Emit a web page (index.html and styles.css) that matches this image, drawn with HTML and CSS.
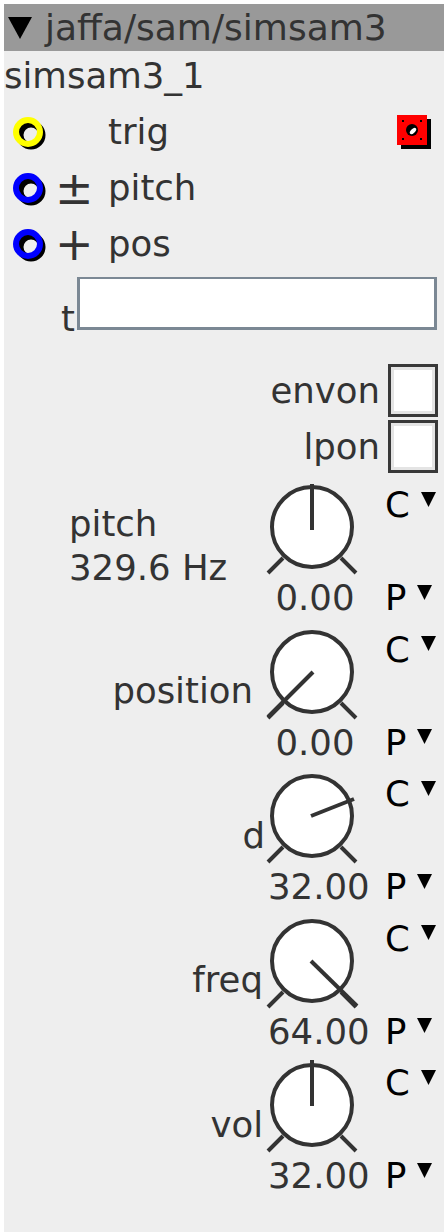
FILE: index.html
```html
<!DOCTYPE html>
<html lang="en">
<head>
    <meta charset="UTF-8">
    <meta name="viewport" content="width=device-width, initial-scale=1.0">
    <title>jaffa/sam/simsam3</title>
    <link rel="stylesheet" href="styles.css">
</head>
<body>
    <div class="module">
        <div class="module-head">
            <svg class="collapse" width="24" height="22" viewBox="0 0 24 22"><polygon points="0,0 24,0 12,22" fill="#000"/></svg>
            <span>jaffa/sam/simsam3</span>
        </div>
        <div class="instance">simsam3_1</div>

        <!-- ports -->
        <div class="port">
            <svg class="jack" width="40" height="40" viewBox="0 0 40 40">
                <circle cx="23" cy="23" r="11" fill="none" stroke="#000" stroke-width="7"/>
                <circle cx="20" cy="20" r="12" fill="none" stroke="#ff0" stroke-width="6"/>
            </svg>
            <span class="sign"></span>
            <span class="port-name">trig</span>
            <svg class="trig-btn" width="38" height="38" viewBox="0 0 38 38">
                <rect x="6" y="6" width="30" height="30" fill="#000"/>
                <rect x="2" y="2" width="30" height="30" fill="#f00"/>
                <rect x="7" y="7" width="2" height="2" fill="#000"/>
                <rect x="25" y="7" width="2" height="2" fill="#000"/>
                <rect x="7" y="25" width="2" height="2" fill="#000"/>
                <rect x="25" y="25" width="2" height="2" fill="#000"/>
                <circle cx="17" cy="17" r="6" fill="#000"/>
                <ellipse cx="18" cy="18" rx="4" ry="2" transform="rotate(-45 18 18)" fill="#fff"/>
            </svg>
        </div>
        <div class="port">
            <svg class="jack" width="40" height="40" viewBox="0 0 40 40">
                <circle cx="23" cy="23" r="11" fill="none" stroke="#000" stroke-width="7"/>
                <circle cx="20" cy="20" r="12" fill="none" stroke="#00f" stroke-width="6"/>
            </svg>
            <span class="sign">±</span>
            <span class="port-name">pitch</span>
        </div>
        <div class="port">
            <svg class="jack" width="40" height="40" viewBox="0 0 40 40">
                <circle cx="23" cy="23" r="11" fill="none" stroke="#000" stroke-width="7"/>
                <circle cx="20" cy="20" r="12" fill="none" stroke="#00f" stroke-width="6"/>
            </svg>
            <span class="sign">+</span>
            <span class="port-name">pos</span>
        </div>

        <!-- params -->
        <div class="text-row">
            <label for="t" class="text-label">t</label>
            <input type="text" id="t" class="text-input">
        </div>
        <div class="check-row first">
            <label for="envon">envon</label>
            <input type="checkbox" id="envon" class="check">
        </div>
        <div class="check-row">
            <label for="lpon">lpon</label>
            <input type="checkbox" id="lpon" class="check">
        </div>

        <div class="knobs">
            <div class="knob-row">
                <div class="knob-label pitch-label">pitch<br>329.6 Hz</div>
                <div class="knob">
                    <svg width="100" height="104" viewBox="0 0 100 104">
                        <circle cx="50" cy="53" r="40" fill="#fff" stroke="#333" stroke-width="4"/>
                        <path d="M6 99 L21 84 M79 84 L94 99" stroke="#333" stroke-width="4"/>
                        <path d="M50 56 L50 10" stroke="#333" stroke-width="4"/>
                    </svg>
                    <div class="knob-value">0.00</div>
                </div>
                <div class="knob-side">
                    <div class="mode">C<svg class="drop" width="15" height="15" viewBox="0 0 15 15"><polygon points="0,0 15,0 7.5,15" fill="#000"/></svg></div>
                    <div class="mode">P<svg class="drop" width="15" height="15" viewBox="0 0 15 15"><polygon points="0,0 15,0 7.5,15" fill="#000"/></svg></div>
                </div>
            </div>

            <div class="knob-row">
                <div class="knob-label position-label">position</div>
                <div class="knob">
                    <svg width="100" height="104" viewBox="0 0 100 104">
                        <circle cx="50" cy="53" r="40" fill="#fff" stroke="#333" stroke-width="4"/>
                        <path d="M6 99 L21 84 M79 84 L94 99" stroke="#333" stroke-width="4"/>
                        <path d="M51 53 L6 98" stroke="#333" stroke-width="4"/>
                    </svg>
                    <div class="knob-value">0.00</div>
                </div>
                <div class="knob-side">
                    <div class="mode">C<svg class="drop" width="15" height="15" viewBox="0 0 15 15"><polygon points="0,0 15,0 7.5,15" fill="#000"/></svg></div>
                    <div class="mode">P<svg class="drop" width="15" height="15" viewBox="0 0 15 15"><polygon points="0,0 15,0 7.5,15" fill="#000"/></svg></div>
                </div>
            </div>

            <div class="knob-row">
                <div class="knob-label short-label">d</div>
                <div class="knob">
                    <svg width="100" height="104" viewBox="0 0 100 104">
                        <circle cx="50" cy="53" r="40" fill="#fff" stroke="#333" stroke-width="4"/>
                        <path d="M6 99 L21 84 M79 84 L94 99" stroke="#333" stroke-width="4"/>
                        <path d="M49 53 L92 36" stroke="#333" stroke-width="4"/>
                    </svg>
                    <div class="knob-value">32.00</div>
                </div>
                <div class="knob-side">
                    <div class="mode">C<svg class="drop" width="15" height="15" viewBox="0 0 15 15"><polygon points="0,0 15,0 7.5,15" fill="#000"/></svg></div>
                    <div class="mode">P<svg class="drop" width="15" height="15" viewBox="0 0 15 15"><polygon points="0,0 15,0 7.5,15" fill="#000"/></svg></div>
                </div>
            </div>

            <div class="knob-row">
                <div class="knob-label">freq</div>
                <div class="knob">
                    <svg width="100" height="104" viewBox="0 0 100 104">
                        <circle cx="50" cy="53" r="40" fill="#fff" stroke="#333" stroke-width="4"/>
                        <path d="M6 99 L21 84 M79 84 L94 99" stroke="#333" stroke-width="4"/>
                        <path d="M49 53 L95 98" stroke="#333" stroke-width="4"/>
                    </svg>
                    <div class="knob-value">64.00</div>
                </div>
                <div class="knob-side">
                    <div class="mode">C<svg class="drop" width="15" height="15" viewBox="0 0 15 15"><polygon points="0,0 15,0 7.5,15" fill="#000"/></svg></div>
                    <div class="mode">P<svg class="drop" width="15" height="15" viewBox="0 0 15 15"><polygon points="0,0 15,0 7.5,15" fill="#000"/></svg></div>
                </div>
            </div>

            <div class="knob-row">
                <div class="knob-label">vol</div>
                <div class="knob">
                    <svg width="100" height="104" viewBox="0 0 100 104">
                        <circle cx="50" cy="53" r="40" fill="#fff" stroke="#333" stroke-width="4"/>
                        <path d="M6 99 L21 84 M79 84 L94 99" stroke="#333" stroke-width="4"/>
                        <path d="M50 54 L50 8" stroke="#333" stroke-width="4"/>
                    </svg>
                    <div class="knob-value">32.00</div>
                </div>
                <div class="knob-side">
                    <div class="mode">C<svg class="drop" width="15" height="15" viewBox="0 0 15 15"><polygon points="0,0 15,0 7.5,15" fill="#000"/></svg></div>
                    <div class="mode">P<svg class="drop" width="15" height="15" viewBox="0 0 15 15"><polygon points="0,0 15,0 7.5,15" fill="#000"/></svg></div>
                </div>
            </div>
        </div>
    </div>
</body>
</html>
```

FILE: styles.css
```css
body {
    margin: 0;
    background-color: #fff;
    font-family: "DejaVu Sans", Verdana, sans-serif;
    font-size: 35.5px;
    color: #333;
}
.module {
    margin: 4px 4px 0;
    min-height: 1228px;
    background-color: #eee;
}
.module-head {
    display: flex;
    align-items: center;
    height: 47px;
    background-color: #999;
    font-size: 36px;
    line-height: 47px;
}
.collapse {
    margin: 0 13px 0 4px;
}
.instance {
    height: 50px;
    line-height: 50px;
    margin-bottom: 3px;
}
.port {
    display: flex;
    align-items: center;
    height: 56px;
    line-height: 56px;
}
.jack {
    margin-left: 4px;
}
.sign {
    width: 60px;
    padding-left: 7px;
    box-sizing: border-box;
    font-size: 46px;
}
.trig-btn {
    margin-left: auto;
    margin-right: 11px;
}
.text-row {
    display: flex;
    justify-content: flex-end;
    align-items: flex-end;
    margin-top: 5px;
    padding-right: 7px;
}
.text-label {
    line-height: 23px;
    margin-right: 2px;
}
.text-input {
    width: 360px;
    height: 53px;
    box-sizing: border-box;
    margin: 0;
    border: 3px solid #7b8894;
    border-top-width: 2px;
    background: #fff;
    outline: none;
}
.check-row {
    display: flex;
    justify-content: flex-end;
    align-items: center;
    gap: 8px;
    margin-top: 3px;
    padding-right: 6px;
}
.check-row.first {
    margin-top: 34px;
}
.check {
    appearance: none;
    width: 50px;
    height: 53px;
    margin: 0;
    border: 3px solid #383838;
    background: #fff;
    box-shadow: inset 0 0 0 3px #e4e4e4;
}
.knobs {
    margin-top: 1px;
}
.knob-row {
    display: flex;
    height: 144.5px;
    padding-right: 7px;
}
.knob-label {
    flex: 1;
    align-self: center;
    text-align: right;
    line-height: 41px;
    margin-right: -1px;
}
.pitch-label {
    flex: none;
    margin-left: 65px;
    margin-right: auto;
    text-align: left;
    line-height: 44px;
}
.position-label {
    margin-right: 9px;
}
.short-label {
    margin-right: -3px;
}
.knob {
    width: 100px;
}
.knob svg {
    display: block;
}
.knob-value {
    line-height: 40.5px;
    text-align: center;
    padding-left: 6px;
    white-space: nowrap;
}
.knob-side {
    display: flex;
    flex-direction: column;
    justify-content: space-between;
    width: 52px;
    margin-left: 23px;
    padding-top: 11px;
    color: #000;
}
.mode {
    line-height: 40.5px;
    white-space: nowrap;
}
.drop {
    margin-left: 11px;
    vertical-align: 10.5px;
}
```
